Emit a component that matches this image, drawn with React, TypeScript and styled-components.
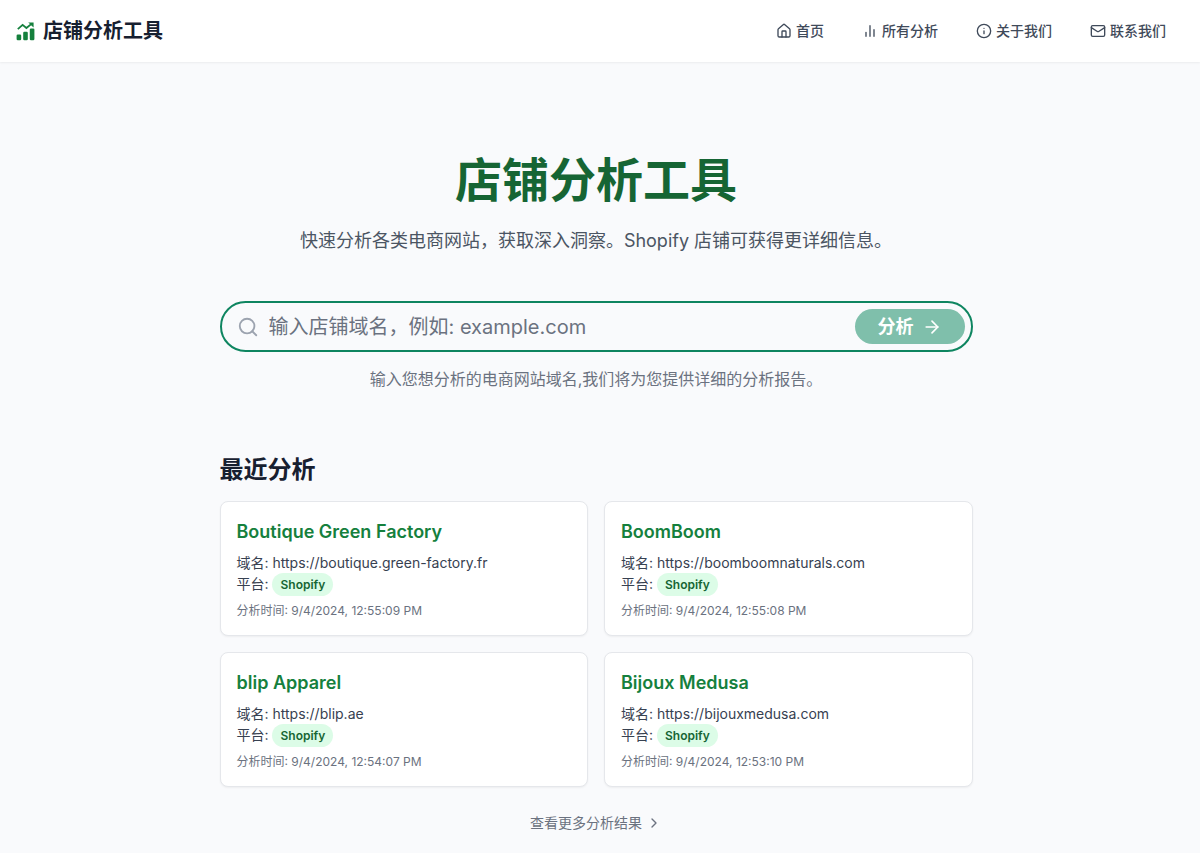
import React from "react";
import styled, { createGlobalStyle } from "styled-components";
import { ArrowRight, ChevronRight, House, Info, Mail, Search } from "lucide-react";

const Global = createGlobalStyle`
  *, *::before, *::after { box-sizing: border-box; }
  body {
    margin: 0;
    background: #f9fafc;
    color: #172030;
    font-family: Inter, "Noto Sans CJK SC", sans-serif;
    -webkit-font-smoothing: antialiased;
  }
  h1, h2, h3, p { margin: 0; }
  a { color: inherit; text-decoration: none; }
`;

const Header = styled.header`
  display: flex;
  align-items: center;
  justify-content: space-between;
  padding: 17px 34px 17px 16px;
  background: #fff;
  box-shadow: 0 1px 2px rgba(0, 0, 0, 0.06);
`;

const Brand = styled.a`
  display: flex;
  align-items: center;
  gap: 8px;
  font-size: 20px;
  line-height: 28px;
  font-weight: 600;

  svg { color: #15803d; }
`;

const Nav = styled.nav`
  display: flex;
  gap: 38px;
`;

const NavLink = styled.a`
  display: flex;
  align-items: center;
  gap: 4px;
  color: #3f4a5a;
  font-size: 14px;
  line-height: 20px;
  font-weight: 500;
`;

const Main = styled.main`
  display: flex;
  flex-direction: column;
  align-items: center;
  padding: 88px 24px 20px 16px;
`;

const Content = styled.div`
  display: flex;
  flex-direction: column;
  width: 100%;
  max-width: 753px;
`;

const Title = styled.h1`
  color: #166534;
  font-size: 47px;
  line-height: 60px;
  font-weight: 700;
  text-align: center;
`;

const Lead = styled.p`
  margin-top: 17px;
  color: #4b5563;
  font-size: 18px;
  line-height: 28px;
  text-align: center;
`;

const SearchForm = styled.form`
  display: flex;
  align-items: center;
  gap: 10px;
  margin-top: 46px;
  padding: 6px 6px 6px 15px;
  border: 2px solid #0e8560;
  border-radius: 26px;
  color: #9ca3af;
`;

const DomainInput = styled.input`
  flex: 1;
  min-width: 0;
  padding: 0;
  border: 0;
  outline: 0;
  background: transparent;
  color: #111827;
  font: 400 20px/28px Inter, "Noto Sans CJK SC", sans-serif;

  &::placeholder { color: #6b7280; opacity: 1; }
`;

const SubmitButton = styled.button`
  display: flex;
  align-items: center;
  gap: 8px;
  height: 35px;
  padding: 0 23px;
  border: 0;
  border-radius: 18px;
  background: #7fbfab;
  color: #fff;
  font: 600 18px/28px Inter, "Noto Sans CJK SC", sans-serif;
`;

const Hint = styled.p`
  margin-top: 15px;
  color: #6b7280;
  font-size: 16px;
  line-height: 24px;
  text-align: center;
`;

const SectionTitle = styled.h2`
  margin-top: 63px;
  font-size: 24px;
  line-height: 32px;
  font-weight: 600;
`;

const CardGrid = styled.div`
  display: grid;
  grid-template-columns: repeat(auto-fit, minmax(280px, 1fr));
  gap: 16px;
  margin-top: 15px;
`;

const Card = styled.article`
  padding: 16px;
  border: 1px solid #e5e7eb;
  border-radius: 8px;
  background: #fff;
  box-shadow: 0 1px 2px rgba(0, 0, 0, 0.05);
`;

const CardTitle = styled.h3`
  margin-bottom: 7px;
  color: #15803d;
  font-size: 18px;
  line-height: 27px;
  font-weight: 600;
`;

const CardLine = styled.p`
  color: #374151;
  font-size: 14px;
  line-height: 21px;
`;

const PlatformBadge = styled.span`
  padding: 4px 8px;
  border-radius: 12px;
  background: #dcfce7;
  color: #166534;
  font-size: 12px;
  line-height: 16px;
  font-weight: 600;
`;

const CardTime = styled.p`
  margin-top: 9px;
  color: #6b7280;
  font-size: 12px;
  line-height: 16px;
`;

const MoreLink = styled.a`
  display: flex;
  align-items: center;
  align-self: center;
  gap: 4px;
  margin-top: 26px;
  color: #6b7280;
  font-size: 14px;
  line-height: 20px;
`;

const LogoIcon = () => (
  <svg width="19" height="19" viewBox="0 0 19 19" fill="currentColor" aria-hidden="true">
    <rect x="0.6" y="12.6" width="4.6" height="5.6" rx="1.2" />
    <rect x="7.2" y="9.8" width="4.6" height="8.4" rx="1.2" />
    <rect x="13.8" y="6.6" width="4.6" height="11.6" rx="1.2" />
    <path d="M1.8 7.2 6.6 2.9 10.4 6 15.8 1.6" fill="none" stroke="currentColor" strokeWidth="1.8" />
    <path d="M12.2 0.4h5.4v5.2l-1.7-1.5-2.2-2.3z" />
  </svg>
);

const BarsIcon = () => (
  <svg width="16" height="16" viewBox="0 0 24 24" fill="none" stroke="currentColor" strokeWidth="2" strokeLinecap="round" aria-hidden="true">
    <path d="M18 20V10M12 20V4M6 20v-6" />
  </svg>
);

const navItems = [
  { label: "首页", icon: <House size={16} strokeWidth={2} /> },
  { label: "所有分析", icon: <BarsIcon /> },
  { label: "关于我们", icon: <Info size={16} strokeWidth={2} /> },
  { label: "联系我们", icon: <Mail size={16} strokeWidth={2} /> },
];

const analyses = [
  { name: "Boutique Green Factory", domain: "https://boutique.green-factory.fr", time: "9/4/2024, 12:55:09 PM" },
  { name: "BoomBoom", domain: "https://boomboomnaturals.com", time: "9/4/2024, 12:55:08 PM" },
  { name: "blip Apparel", domain: "https://blip.ae", time: "9/4/2024, 12:54:07 PM" },
  { name: "Bijoux Medusa", domain: "https://bijouxmedusa.com", time: "9/4/2024, 12:53:10 PM" },
];

export default function App() {
  return (
    <>
      <Global />
      <Header>
        <Brand href="#">
          <LogoIcon />
          店铺分析工具
        </Brand>
        <Nav>
          {navItems.map((item) => (
            <NavLink href="#" key={item.label}>
              {item.icon}
              {item.label}
            </NavLink>
          ))}
        </Nav>
      </Header>
      <Main>
        <Content>
          <Title>店铺分析工具</Title>
          <Lead>快速分析各类电商网站，获取深入洞察。Shopify 店铺可获得更详细信息。</Lead>
          <SearchForm onSubmit={(event) => event.preventDefault()}>
            <Search size={22} strokeWidth={2} aria-hidden="true" />
            <DomainInput type="text" aria-label="店铺域名" placeholder="输入店铺域名，例如: example.com" />
            <SubmitButton type="submit">
              分析
              <ArrowRight size={20} />
            </SubmitButton>
          </SearchForm>
          <Hint>输入您想分析的电商网站域名,我们将为您提供详细的分析报告。</Hint>
          <SectionTitle>最近分析</SectionTitle>
          <CardGrid>
            {analyses.map((item) => (
              <Card key={item.name}>
                <CardTitle>{item.name}</CardTitle>
                <CardLine>域名: {item.domain}</CardLine>
                <CardLine>
                  平台: <PlatformBadge>Shopify</PlatformBadge>
                </CardLine>
                <CardTime>分析时间: {item.time}</CardTime>
              </Card>
            ))}
          </CardGrid>
          <MoreLink href="#">
            查看更多分析结果
            <ChevronRight size={16} />
          </MoreLink>
        </Content>
      </Main>
    </>
  );
}
